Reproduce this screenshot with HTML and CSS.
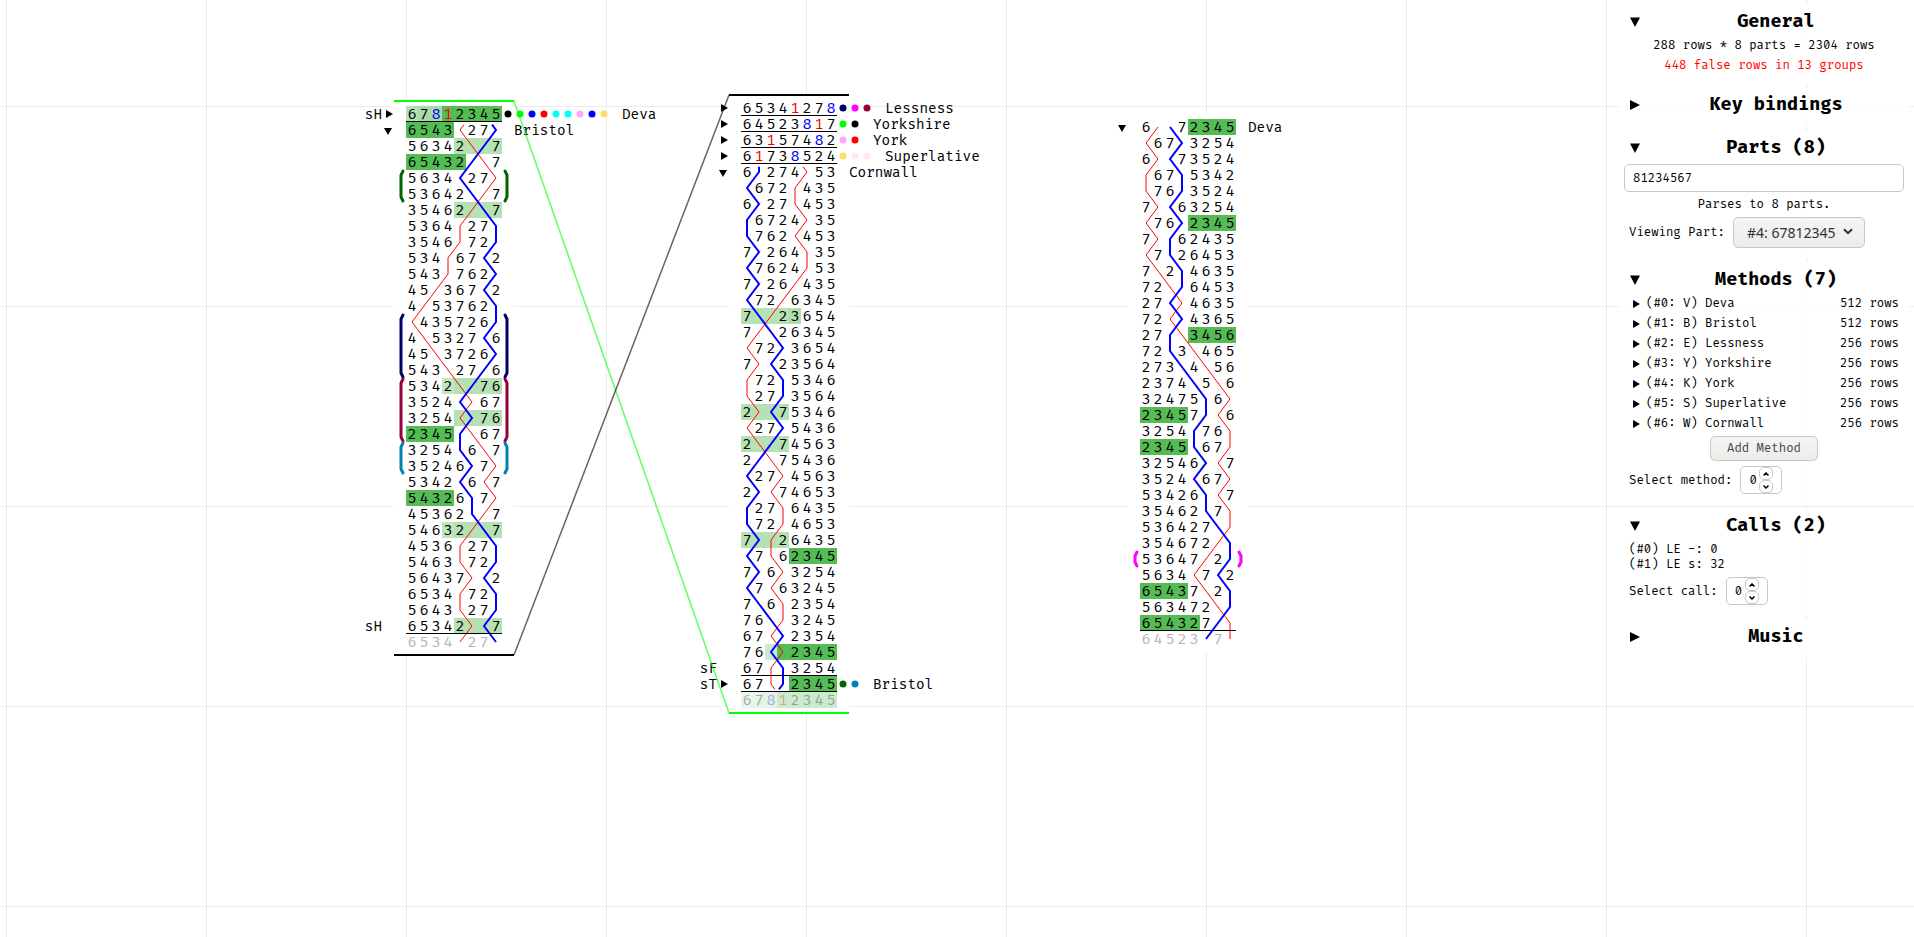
FILE: index.html
```html
<!DOCTYPE html>
<html lang="en">
<head>
<meta charset="utf-8">
<title>Composition editor</title>
<link rel="stylesheet" href="styles.css">
</head>
<body>
<svg class="canvas" id="canvas" role="img" aria-label="Composition canvas"></svg>

<aside class="sidebar">
  <section class="panel">
    <header class="panel-head">
      <button class="toggle" aria-label="Collapse General" aria-expanded="true"><svg class="tri" viewBox="0 0 10 10"><path d="M0 0.500H10L5 10Z"/></svg></button>
      <h2>General</h2>
    </header>
    <p class="line center">288 rows * 8 parts = 2304 rows</p>
    <p class="line center error">448 false rows in 13 groups</p>
  </section>

  <section class="panel">
    <header class="panel-head">
      <button class="toggle" aria-label="Expand Key bindings" aria-expanded="false"><svg class="tri" viewBox="0 0 10 10"><path d="M0 0L10 5L0 10Z"/></svg></button>
      <h2>Key bindings</h2>
    </header>
  </section>

  <section class="panel">
    <header class="panel-head">
      <button class="toggle" aria-label="Collapse Parts" aria-expanded="true"><svg class="tri" viewBox="0 0 10 10"><path d="M0 0.500H10L5 10Z"/></svg></button>
      <h2>Parts (8)</h2>
    </header>
    <input class="part-head" type="text" value="81234567" aria-label="Part heads">
    <p class="line center">Parses to 8 parts.</p>
    <div class="field">
      <label for="part">Viewing Part:</label>
      <span class="select-wrap">
        <select id="part"><option>#4: 67812345</option></select>
        <svg class="chevron" viewBox="0 0 10 7"><path d="M1 1.200L5 5.200L9 1.200"/></svg>
      </span>
    </div>
  </section>

  <section class="panel">
    <header class="panel-head">
      <button class="toggle" aria-label="Collapse Methods" aria-expanded="true"><svg class="tri" viewBox="0 0 10 10"><path d="M0 0.500H10L5 10Z"/></svg></button>
      <h2>Methods (7)</h2>
    </header>
    <ul class="methods" id="methods"></ul>
    <button class="add">Add Method</button>
    <div class="field">
      <label for="method">Select method:</label>
      <span class="spin">
        <input id="method" type="number" value="0">
        <span class="steps">
          <button aria-label="Next method"><svg viewBox="0 0 6 4"><path d="M0.500 3.500L3 1L5.500 3.500"/></svg></button>
          <button aria-label="Previous method"><svg viewBox="0 0 6 4"><path d="M0.500 0.500L3 3L5.500 0.500"/></svg></button>
        </span>
      </span>
    </div>
  </section>

  <section class="panel">
    <header class="panel-head">
      <button class="toggle" aria-label="Collapse Calls" aria-expanded="true"><svg class="tri" viewBox="0 0 10 10"><path d="M0 0.500H10L5 10Z"/></svg></button>
      <h2>Calls (2)</h2>
    </header>
    <ul class="calls">
      <li>(#0) LE -: 0</li>
      <li>(#1) LE s: 32</li>
    </ul>
    <div class="field">
      <label for="call">Select call:</label>
      <span class="spin">
        <input id="call" type="number" value="0">
        <span class="steps">
          <button aria-label="Next call"><svg viewBox="0 0 6 4"><path d="M0.500 3.500L3 1L5.500 3.500"/></svg></button>
          <button aria-label="Previous call"><svg viewBox="0 0 6 4"><path d="M0.500 0.500L3 3L5.500 0.500"/></svg></button>
        </span>
      </span>
    </div>
  </section>

  <section class="panel">
    <header class="panel-head">
      <button class="toggle" aria-label="Expand Music" aria-expanded="false"><svg class="tri" viewBox="0 0 10 10"><path d="M0 0L10 5L0 10Z"/></svg></button>
      <h2>Music</h2>
    </header>
  </section>
</aside>
<script src="app.js"></script>
</body>
</html>
```
FILE: styles.css
```css
* {
  box-sizing: border-box;
}

body {
  margin: 0;
  height: 100vh;
  overflow: hidden;
  position: relative;
  background: #fff;
  color: #000;
  font-family: "Fira Code", "Fira Mono", "DejaVu Sans Mono", monospace;
  font-size: 12px;
}

.canvas {
  display: block;
  width: 100%;
  height: 100%;
}

.grid-line { stroke: #ececec; stroke-width: 1; }
.frag-bg { fill: #fff; }
.bell {
  font-family: "Fira Code", "Fira Mono", "Noto Sans", sans-serif;
  font-size: 15px;
  text-anchor: middle;
}
.bell-1 { fill: #f00; }
.bell-8 { fill: #00f; }
.faded { opacity: 0.3; }
.label { font-size: 14px; }
.label-left { text-anchor: end; }
.ruleoff { stroke: #000; stroke-width: 1; }
.path { fill: none; }
.path-1 { stroke: #f00; stroke-width: 1; }
.path-8 { stroke: #00f; stroke-width: 2; }
.bracket { fill: none; stroke-width: 3; stroke-linecap: round; }
.link { stroke-width: 1.5; opacity: 0.6; }
.edge { stroke-width: 2; }

.sidebar {
  position: absolute;
  top: 5px;
  right: 5px;
  width: 290px;
  display: flex;
  flex-direction: column;
  gap: 5px;
}

.panel {
  padding: 6px 5px 7px;
  background: rgba(255, 255, 255, 0.9);
}

.panel-head {
  display: flex;
  align-items: center;
  height: 22px;
  margin-bottom: 3px;
}

.panel-head h2 {
  flex: 1;
  margin: 0;
  font-size: 18px;
  line-height: 22px;
  font-weight: 700;
  text-align: center;
}

button {
  font: inherit;
  color: inherit;
  cursor: pointer;
}

.toggle {
  display: flex;
  width: 24px;
  padding: 0 6px;
  border: 0;
  background: none;
}

.tri { width: 10px; height: 10px; flex: none; }

.line {
  margin: 0;
  line-height: 20px;
}
.center { text-align: center; }
.error { color: #f00; }

.part-head {
  display: block;
  width: 100%;
  height: 28px;
  margin: 5px 0 3px;
  padding: 0 8px;
  border: 1px solid #cdc7c2;
  border-radius: 5px;
  background: #fff;
  font: inherit;
}

.field {
  display: flex;
  align-items: center;
  gap: 8px;
  margin: 2px 0 3px;
  padding-left: 5px;
}

.select-wrap { position: relative; display: flex; }

select {
  appearance: none;
  height: 31px;
  padding: 0 28px 0 13px;
  border: 1px solid #cdc7c2;
  border-radius: 5px;
  background: linear-gradient(#f6f5f4, #edebe9);
  color: #2e3436;
  font: 14px "Noto Sans", sans-serif;
}

.chevron {
  position: absolute;
  right: 12px;
  top: 11px;
  width: 10px;
  height: 7px;
  fill: none;
  stroke: #2e3436;
  stroke-width: 2;
  pointer-events: none;
}

ul {
  margin: 0;
  padding: 0;
  list-style: none;
}

.methods li {
  display: flex;
  align-items: center;
  padding: 0 5px 0 8px;
  line-height: 20px;
}
.methods button {
  display: flex;
  padding: 0 6px 0 1px;
  border: 0;
  background: none;
}
.methods svg { width: 7px; height: 8px; }
.methods .rows { margin-left: auto; }

.add {
  display: block;
  width: 108px;
  height: 25px;
  margin: 2px auto 5px;
  padding: 0;
  border: 1px solid #cdc7c2;
  border-radius: 5px;
  background: linear-gradient(#f6f5f4, #edebe9);
  color: #3f4548;
}

.calls {
  padding: 2px 0 3px 5px;
  line-height: 15px;
}

.spin {
  display: flex;
  align-items: center;
  gap: 2px;
  width: 42px;
  height: 28px;
  padding-left: 8px;
  border: 1px solid #cdc7c2;
  border-radius: 5px;
  background: #fff;
}
.spin input {
  width: 8px;
  padding: 0;
  border: 0;
  outline: 0;
  background: none;
  font: inherit;
  appearance: textfield;
}
.spin input::-webkit-inner-spin-button { display: none; }
.steps { display: flex; flex-direction: column; }
.steps button {
  display: flex;
  align-items: center;
  justify-content: center;
  width: 14px;
  height: 13px;
  padding: 0;
  border: 1px solid #cdc7c2;
  border-radius: 5px;
  background: #fff;
}
.steps svg {
  width: 6px;
  height: 4px;
  fill: none;
  stroke: #000;
  stroke-width: 1.500;
}
```
FILE: app.js
```javascript
const COL = 12;
const ROW = 16;
const DARK = "#55bb55";
const LIGHT = "#b6e1b5";
const FAINT = "#ccebcc";

const canvas = document.getElementById("canvas");

function add(parent, tag, attrs, text) {
  const el = document.createElementNS("http://www.w3.org/2000/svg", tag);
  for (const key in attrs) el.setAttribute(key, attrs[key]);
  if (text !== undefined) el.textContent = text;
  parent.appendChild(el);
  return el;
}

// highlights: [row, first column, last column, colour]
// folds: row -> { name, dots, open }
const fragments = [
  {
    x: 406, y: 106,
    rows: "67812345 65431278 56342187 65432817 56348271 53642817 35462187 53641278 35461728 53416782 54317628 45136782 41537628 14357268 41532786 45137268 54312786 53421876 35248167 32541876 23458167 32548617 35246871 53428617 54326871 45362817 54632187 45361278 54631728 56437182 65341728 56431278 65342187 65341278",
    plain: [0],
    start: { row: 1, 1: 5, 8: 6 },
    ruleoffs: [0, 32],
    highlights: [[0, 0, 0, LIGHT], [0, 1, 2, "#a9dba9"], [0, 3, 7, DARK], [1, 0, 3, DARK], [2, 4, 7, LIGHT], [3, 0, 4, DARK], [6, 4, 7, LIGHT], [17, 3, 3, "#bfe6bf"], [17, 4, 7, LIGHT], [19, 4, 7, LIGHT], [20, 0, 3, DARK], [24, 0, 3, DARK], [26, 3, 3, "#bfe6bf"], [26, 4, 7, LIGHT], [32, 4, 7, LIGHT]],
    brackets: [[4, 5, "#006400"], [13, 16, "#000064"], [17, 20, "#96003c"], [21, 22, "#0082b4"]],
    calls: { 0: "sH", 32: "sH" },
    folds: {
      0: { name: "Deva", dots: ["#000", "#0f0", "#00f", "#f00", "#0ff", "#0ff", "#ffa5ff", "#00f", "#ffdc64"] },
      1: { name: "Bristol", dots: [], open: true }
    }
  },
  {
    x: 741, y: 100,
    rows: "65341278 64523817 63157482 61738524 68274153 86721435 68271453 86724135 87621453 78264135 87624153 78261435 87216345 78123654 71826345 17283654 71823564 17285346 12783564 21875346 12785436 21874563 28175436 82714563 28174653 82716435 87214653 78126435 87162345 78613254 87163245 78612354 76813245 67182354 76812345 67183254 67182345 67812345",
    plain: [0, 1, 2, 3, 37],
    start: { row: 4, 1: 4, 8: 1 },
    end: { row: 36, 1: 3, 8: 2 },
    ruleoffs: [0, 1, 2, 3, 35, 36],
    highlights: [[13, 0, 3, LIGHT], [13, 4, 4, "#b0deb0"], [19, 0, 3, LIGHT], [21, 0, 3, LIGHT], [27, 0, 3, LIGHT], [28, 4, 7, DARK], [34, 2, 2, FAINT], [34, 3, 7, DARK], [36, 4, 7, DARK], [37, 0, 0, LIGHT], [37, 1, 2, "#a9dba9"], [37, 3, 7, DARK]],
    brackets: [],
    calls: { 35: "sF", 36: "sT" },
    folds: {
      0: { name: "Lessness", dots: ["#000064", "#f0f", "#96003c"] },
      1: { name: "Yorkshire", dots: ["#0f0", "#000"] },
      2: { name: "York", dots: ["#ffa5ff", "#f00"] },
      3: { name: "Superlative", dots: ["#ffdc64", "#ffebe6", "#ffebe6"] },
      4: { name: "Cornwall", dots: [], open: true },
      36: { name: "Bristol", dots: ["#006400", "#0082b4"] }
    }
  },
  {
    x: 1140, y: 119,
    rows: "61872345 16783254 61873524 16785342 17683524 71863254 17682345 71862435 17826453 71284635 72186453 27814635 72184365 27813456 72831465 27384156 23748516 32475861 23457816 32548761 23458671 32546817 35248671 53426817 35462871 53642781 35467218 53647128 56341782 65437128 56347218 65432781 64523871",
    plain: [],
    ruleoffs: [31],
    highlights: [[0, 4, 7, DARK], [6, 4, 7, DARK], [13, 4, 7, DARK], [18, 0, 3, DARK], [20, 0, 3, DARK], [29, 0, 3, DARK], [31, 0, 4, DARK]],
    brackets: [[27, 27, "#f0f"]],
    calls: {},
    folds: { 0: { name: "Deva", dots: [], open: true } }
  }
];

const links = [
  { from: [514, 101], to: [729, 713], color: "#0f0", edges: [[394, 101], [729, 713]] },
  { from: [514, 655], to: [729, 95], color: "#000", edges: [[394, 655], [729, 95]] }
];

function drawGrid() {
  for (let x = 6.5; x < window.innerWidth; x += 200)
    add(canvas, "line", { class: "grid-line", x1: x, x2: x, y1: 0, y2: "100%" });
  for (let y = 106.5; y < window.innerHeight; y += 200)
    add(canvas, "line", { class: "grid-line", x1: 0, x2: "100%", y1: y, y2: y });
}

function drawFragment(frag) {
  const rows = frag.rows.split(" ");
  const last = rows.length - 1;
  const right = frag.x + 8 * COL;
  const cx = col => frag.x + COL * col + COL / 2;
  const cy = row => frag.y + ROW * row + ROW / 2;
  const g = add(canvas, "g", {});

  add(g, "rect", { class: "frag-bg", x: frag.x - 12, y: frag.y - 5, width: 120, height: rows.length * ROW + 10 });

  for (const [row, a, b, fill] of frag.highlights)
    add(g, "rect", {
      x: frag.x + a * COL, y: frag.y + row * ROW, width: (b - a + 1) * COL, height: ROW,
      fill, class: row === last ? "faded" : ""
    });

  rows.forEach((row, r) => {
    const group = add(g, "g", { class: r === last ? "faded" : "" });
    [...row].forEach((bell, c) => {
      const onPath = bell === "1" || bell === "8";
      if (onPath && !frag.plain.includes(r)) return;
      add(group, "text", { class: "bell" + (onPath ? " bell-" + bell : ""), x: cx(c), y: cy(r) + 5 }, bell);
    });
  });

  for (const bell of ["1", "8"]) {
    const points = [];
    if (frag.start) {
      const first = rows[frag.start.row].indexOf(bell);
      points.push([cx(first + (frag.start[bell] - first) / 3), cy(frag.start.row - 1 / 3)]);
    }
    rows.forEach((row, r) => {
      if (!frag.plain.includes(r)) points.push([cx(row.indexOf(bell)), cy(r)]);
    });
    if (frag.end) {
      const final = rows[frag.end.row].indexOf(bell);
      points.push([cx(final + (frag.end[bell] - final) / 3), cy(frag.end.row + 1 / 3)]);
    }
    add(g, "polyline", { class: "path path-" + bell, points: points.join(" ") });
  }

  for (const r of frag.ruleoffs) {
    const y = frag.y + ROW * (r + 1) - 0.5;
    add(g, "line", { class: "ruleoff", x1: frag.x, x2: right, y1: y, y2: y });
  }

  for (const [a, b, stroke] of frag.brackets) {
    const top = frag.y + a * ROW + 1;
    const bottom = frag.y + (b + 1) * ROW - 1;
    for (const [x, side] of [[frag.x, -1], [right, 1]])
      add(g, "path", {
        class: "bracket", stroke,
        d: `M${x + side * 3} ${top}L${x + side * 5} ${top + 4}V${bottom - 4}L${x + side * 3} ${bottom}`
      });
  }

  for (const r in frag.calls)
    add(g, "text", { class: "label label-left", x: frag.x - 24, y: cy(+r) + 5 }, frag.calls[r]);

  for (const r in frag.folds) {
    const { name, dots, open } = frag.folds[r];
    const y = cy(+r);
    const x = frag.x;
    add(g, "path", {
      d: open ? `M${x - 22} ${y - 2}h8l-4 7z` : `M${x - 20} ${y - 4}l7 4l-7 4z`
    });
    dots.forEach((fill, i) => add(g, "circle", { cx: right + 6 + i * COL, cy: y, r: 3.5, fill }));
    add(g, "text", { class: "label", x: right + 12 + dots.length * COL, y: y + 5 }, name);
  }
}

function drawLinks() {
  for (const { from, to, color, edges } of links) {
    add(canvas, "line", { class: "link", stroke: color, x1: from[0], y1: from[1], x2: to[0], y2: to[1] });
    for (const [x, y] of edges)
      add(canvas, "line", { class: "edge", stroke: color, x1: x, x2: x + 120, y1: y, y2: y });
  }
}

function listMethods() {
  const methods = [
    ["V", "Deva", 512], ["B", "Bristol", 512], ["E", "Lessness", 256], ["Y", "Yorkshire", 256],
    ["K", "York", 256], ["S", "Superlative", 256], ["W", "Cornwall", 256]
  ];
  document.getElementById("methods").innerHTML = methods.map(([code, name, rows], i) => `
    <li>
      <button aria-label="Expand ${name}"><svg viewBox="0 0 6 7"><path d="M0 0L6 3.500L0 7Z"/></svg></button>
      <span>(#${i}: ${code}) ${name}</span>
      <span class="rows">${rows} rows</span>
    </li>`).join("");
}

drawGrid();
fragments.forEach(drawFragment);
drawLinks();
listMethods();
```
